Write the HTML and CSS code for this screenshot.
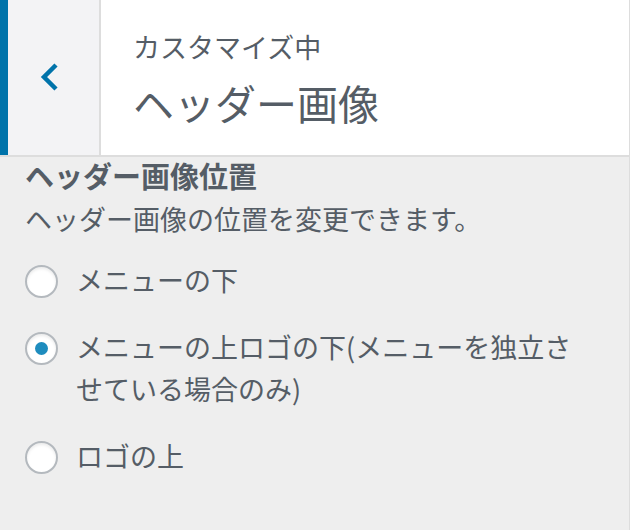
FILE: index.html
```html
<!DOCTYPE html>
<html lang="ja">
<head>
<meta charset="utf-8">
<title>カスタマイズ中 ヘッダー画像</title>
<link rel="stylesheet" href="styles.css">
</head>
<body>
<div class="panel">
  <div class="header">
    <button class="back" type="button" aria-label="戻る">
      <svg class="chevron" width="18" height="28" viewBox="0 0 18 28" aria-hidden="true">
        <path d="M16 2 L4 14 L16 26" fill="none" stroke="#0073aa" stroke-width="4.5" stroke-linejoin="miter"/>
      </svg>
    </button>
    <div class="titles">
      <div class="action">カスタマイズ中</div>
      <h3 class="title">ヘッダー画像</h3>
    </div>
  </div>
  <div class="content">
    <div class="control-title">ヘッダー画像位置</div>
    <div class="description">ヘッダー画像の位置を変更できます。</div>
    <ul class="options">
      <li class="option">
        <span class="radio"></span>
        <span class="label">メニューの下</span>
      </li>
      <li class="option">
        <span class="radio checked"></span>
        <span class="label">メニューの上ロゴの下(メニューを独立させている場合のみ)</span>
      </li>
      <li class="option">
        <span class="radio"></span>
        <span class="label">ロゴの上</span>
      </li>
    </ul>
  </div>
</div>
</body>
</html>
```

FILE: styles.css
```css
html, body {
  margin: 0;
  padding: 0;
  background: #eee;
}

body {
  font-family: "Noto Sans CJK JP", "Noto Sans", sans-serif;
  color: #555d66;
}

.panel {
  width: 629px;
  min-height: 530px;
  border-right: 1px solid #ddd;
  background: #eee;
}

.header {
  display: flex;
  height: 155px;
  background: #fff;
  border-bottom: 2px solid #ddd;
}

.back {
  display: flex;
  align-items: center;
  width: 101px;
  height: 155px;
  margin: 0;
  padding: 0 0 0 32px;
  box-sizing: border-box;
  background: #f3f3f5;
  border: none;
  border-left: 8px solid #0073aa;
  border-right: 2px solid #ddd;
}

.chevron {
  display: block;
  margin-top: -1px;
}

.titles {
  padding: 27px 0 0 32px;
}

.action {
  font-size: 27px;
  line-height: 40px;
}

.title {
  margin: 7px 0 0;
  font-size: 41px;
  font-weight: normal;
  line-height: 56px;
}

.content {
  padding: 0 40px 0 25px;
}

.control-title {
  font-size: 29px;
  font-weight: bold;
  line-height: 36px;
}

.description {
  margin-top: 6px;
  font-size: 27px;
  line-height: 40px;
}

.options {
  list-style: none;
  margin: 20px 0 0;
  padding: 0;
  display: flex;
  flex-direction: column;
  gap: 25px;
}

.option {
  display: flex;
  align-items: flex-start;
  gap: 18px;
}

.radio {
  flex: none;
  width: 33px;
  height: 33px;
  margin-top: 6px;
  box-sizing: border-box;
  border: 2px solid #b4b9be;
  border-radius: 50%;
  background: #fff;
  box-shadow: inset 0 2px 3px rgba(0, 0, 0, 0.08);
  display: flex;
  align-items: center;
  justify-content: center;
}

.radio.checked::before {
  content: "";
  width: 13px;
  height: 13px;
  border-radius: 50%;
  background: #1e8cbe;
}

.label {
  flex: 1;
  font-size: 27px;
  line-height: 42px;
}
```
